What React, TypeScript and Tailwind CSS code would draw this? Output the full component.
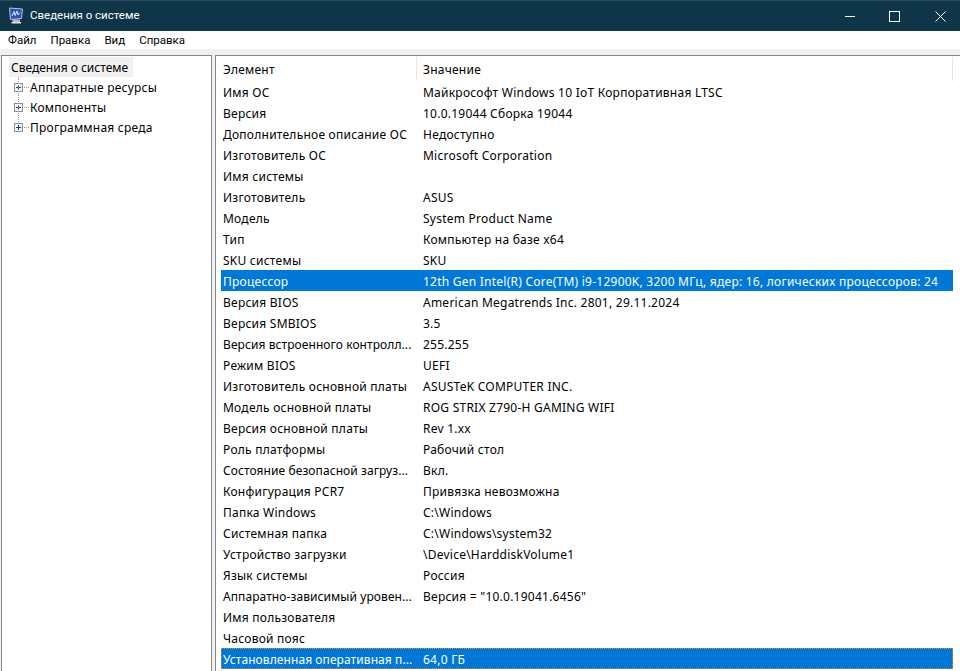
const rows: [string, string, boolean?][] = [
  ["Имя ОС", "Майкрософт Windows 10 IoT Корпоративная LTSC"],
  ["Версия", "10.0.19044 Сборка 19044"],
  ["Дополнительное описание ОС", "Недоступно"],
  ["Изготовитель ОС", "Microsoft Corporation"],
  ["Имя системы", ""],
  ["Изготовитель", "ASUS"],
  ["Модель", "System Product Name"],
  ["Тип", "Компьютер на базе x64"],
  ["SKU системы", "SKU"],
  ["Процессор", "12th Gen Intel(R) Core(TM) i9-12900K, 3200 МГц, ядер: 16, логических процессоров: 24", true],
  ["Версия BIOS", "American Megatrends Inc. 2801, 29.11.2024"],
  ["Версия SMBIOS", "3.5"],
  ["Версия встроенного контролл...", "255.255"],
  ["Режим BIOS", "UEFI"],
  ["Изготовитель основной платы", "ASUSTeK COMPUTER INC."],
  ["Модель основной платы", "ROG STRIX Z790-H GAMING WIFI"],
  ["Версия основной платы", "Rev 1.xx"],
  ["Роль платформы", "Рабочий стол"],
  ["Состояние безопасной загруз...", "Вкл."],
  ["Конфигурация PCR7", "Привязка невозможна"],
  ["Папка Windows", "C:\\Windows"],
  ["Системная папка", "C:\\Windows\\system32"],
  ["Устройство загрузки", "\\Device\\HarddiskVolume1"],
  ["Язык системы", "Россия"],
  ["Аппаратно-зависимый уровен...", "Версия = \"10.0.19041.6456\""],
  ["Имя пользователя", ""],
  ["Часовой пояс", ""],
  ["Установленная оперативная п...", "64,0 ГБ", true],
];

const treeItems = ["Аппаратные ресурсы", "Компоненты", "Программная среда"];

function AppIcon() {
  return (
    <svg width="16" height="18" viewBox="0 0 16 18" className="shrink-0">
      <path d="M1.5 1 L14.5 2 L13.5 11.5 L2.5 12.5 Z" fill="#2c4fb4" stroke="#b9c4dc" />
      <path d="M4 9 L6 4.5 L7 8.5 L9 4 L10 8 L12 5.5" stroke="#e3ebff" fill="none" />
      <path d="M4.5 12.5 H12 V15 H4.5 Z" fill="#bdbdbd" />
      <path d="M3.5 15 H13 V16.5 H3.5 Z" fill="#e6e6e6" />
    </svg>
  );
}

function PlusBox() {
  return (
    <svg width="9" height="9" viewBox="0 0 9 9" className="mt-px shrink-0">
      <rect x="0.5" y="0.5" width="8" height="8" fill="#f4f4f4" stroke="#8e8e8e" />
      <path d="M2 4.5 H7 M4.5 2 V7" stroke="#1f3a70" />
    </svg>
  );
}

export default function App() {
  return (
    <div className="flex h-[671px] w-[960px] flex-col overflow-hidden bg-white font-['Noto_Sans',sans-serif] text-[12px] text-black">
      {/* title bar */}
      <div className="flex h-[31px] shrink-0 items-center border-t border-[#234a5e] bg-[#0f3549] font-['Roboto',sans-serif] text-[11.5px] text-white">
        <div className="ml-[8px] mr-[6px] flex">
          <AppIcon />
        </div>
        <span>Сведения о системе</span>
        <div className="-mr-[3px] ml-auto flex h-full">
          <div className="flex w-[45px] items-center justify-center">
            <div className="h-px w-[10px] bg-white" />
          </div>
          <div className="flex w-[45px] items-center justify-center">
            <div className="h-[11px] w-[11px] border border-white" />
          </div>
          <div className="flex w-[46px] items-center justify-center">
            <svg width="11" height="11" viewBox="0 0 11 11">
              <path d="M0.5 0.5 L10.5 10.5 M10.5 0.5 L0.5 10.5" stroke="#fff" strokeWidth="1" />
            </svg>
          </div>
        </div>
      </div>

      {/* menu */}
      <div className="flex h-[18px] shrink-0 items-center gap-[14px] pl-2 pt-[2px] font-['Roboto',sans-serif] text-[11.5px]">
        <span>Файл</span>
        <span>Правка</span>
        <span>Вид</span>
        <span>Справка</span>
      </div>

      {/* panes */}
      <div className="flex min-h-0 flex-1 gap-[3px] bg-[#f0f0f0] pl-px pt-[6px] tracking-[0.24px]">
        <div className="w-[211px] shrink-0 border-l border-r border-t border-[#828790] bg-white pl-[7px] pt-px">
          <div className="flex h-[20px] w-[124px] items-center bg-[#f0f0f0] pl-[2px] pt-[2px] tracking-normal">Сведения о системе</div>
          <div className="relative">
            <div className="absolute left-[9px] top-0 h-[47px] border-l border-dotted border-[#999]" />
            {treeItems.map((t) => (
              <div key={t} className="flex h-[20px] items-center pl-[5px]">
                <PlusBox />
                <div className="ml-px mt-px w-[5px] border-t border-dotted border-[#999]" />
                <span className="ml-px pt-[2px]">{t}</span>
              </div>
            ))}
          </div>
        </div>
        <div className="min-w-0 flex-1 border-l border-t border-[#828790] bg-white pl-[5px] pt-px">
          <div className="flex h-[24px] items-center">
            <div className="flex h-full w-[196px] items-center border-r border-[#e5e5e5] pl-[2px] pt-[2px]">Элемент</div>
            <div className="mr-[7px] flex h-full flex-1 items-center border-r border-[#e5e5e5] pl-[6px] pt-[2px]">Значение</div>
          </div>
          {rows.map(([k, v, sel], i) => (
            <div
              key={k}
              className={`mr-[7px] flex h-[21px] items-center whitespace-nowrap pt-[2px] ${sel ? "bg-[#0078d7] text-white" : ""} ${
                i === rows.length - 1 ? "outline-1 -outline-offset-1 outline-dotted outline-[#f08a24]" : ""
              }`}
            >
              <span className={`w-[196px] shrink-0 pl-[2px] ${k.endsWith("...") ? "tracking-[0.08px]" : ""}`}>{k}</span>
              <span className="pl-[6px]">{v}</span>
            </div>
          ))}
        </div>
      </div>
    </div>
  );
}
